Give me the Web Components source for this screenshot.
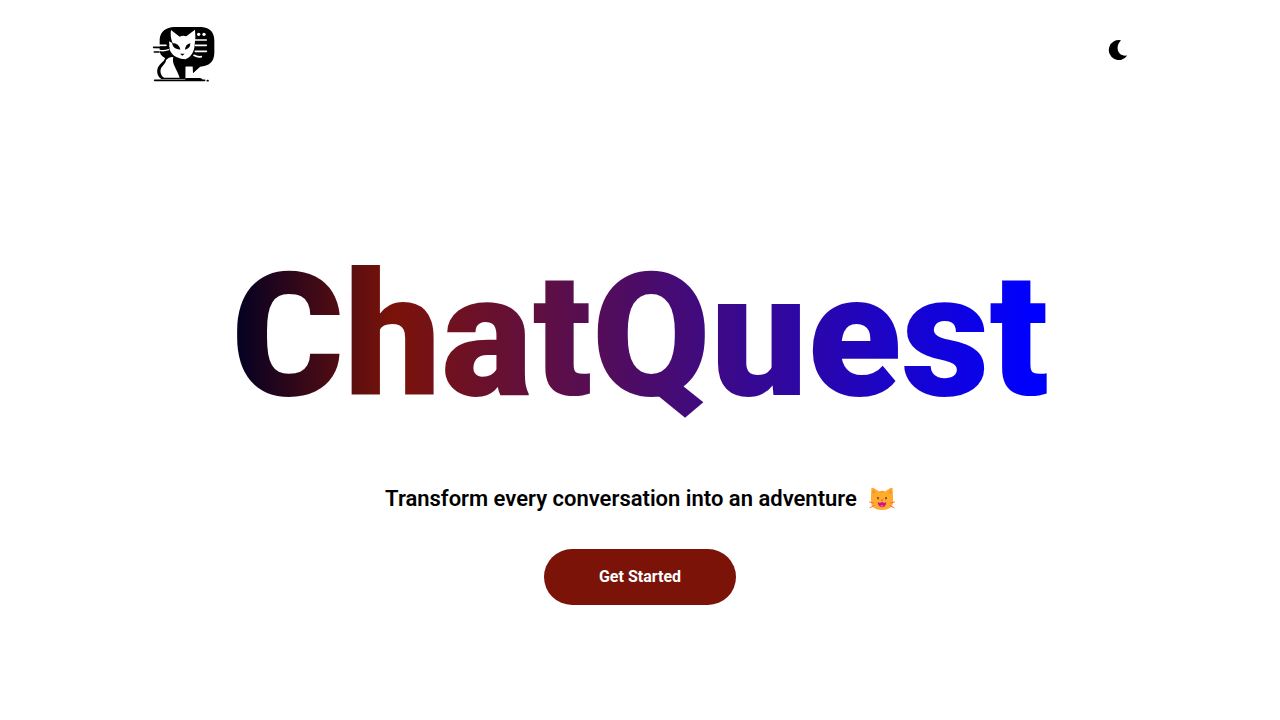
<!DOCTYPE html>
<html lang="en">
<head>
<meta charset="utf-8">
<meta name="viewport" content="width=device-width, initial-scale=1">
<title>ChatQuest</title>
<style>
body { margin: 0; background: #fff; color: #000; font-family: Roboto, sans-serif; }
</style>
</head>
<body>
<chat-page>
  <site-header slot="header"></site-header>
  <hero-title>ChatQuest</hero-title>
  <hero-tagline>Transform every conversation into an adventure</hero-tagline>
  <action-button>Get Started</action-button>
</chat-page>
<script>
const define = (name, html) => {
  const template = document.createElement('template');
  template.innerHTML = html;
  customElements.define(name, class extends HTMLElement {
    constructor() {
      super();
      this.attachShadow({ mode: 'open' }).append(template.content.cloneNode(true));
    }
  });
};

define('chat-page', `
<style>
  :host { display: flex; flex-direction: column; min-height: 100vh; }
  main { flex: 1; display: flex; flex-direction: column; align-items: center; padding: 128px 16px 64px; }
</style>
<slot name="header"></slot>
<main><slot></slot></main>`);

define('brand-logo', `
<style>
  :host { display: block; }
  a { display: block; color: inherit; }
  svg { display: block; width: 64px; height: 56px; }
</style>
<a href="#" aria-label="ChatQuest home">
<svg viewBox="24 24 192 168" aria-hidden="true">
  <path d="M91 27H172C199 29 211 44 211 68V106C210 132 195 145 168 146L147 165V146H125V183H52C38 173 36 155 45 143C53 132 61 130 63 120C50 112 48 106 47 98V64C49 40 66 28 91 27Z"/>
  <path fill="#fff" d="M81 36C90 43 99 50 107 56Q117 51 127 55L153 35Q156 57 152 80C151 100 143 116 124 124Q111 124 97 117C82 108 74 96 76 80L75 70L86 76C80 62 79 48 81 36Z"/>
  <path fill="#fff" d="M66 126Q77 115 88 118C84 132 91 142 96 154Q103 168 107 179H60C49 172 46 156 54 146C63 136 66 132 66 126Z"/>
  <path fill="#fff" d="M125 146H146V181H125Z"/>
  <path d="M84 75Q106 76 109 95Q87 94 84 75ZM123 95Q124 79 139 76Q139 92 123 95ZM108 107H122L115 113Z"/>
  <path d="M146 145H169L147 165Z"/>
  <g fill="none" stroke="#fff" stroke-width="5" stroke-linecap="round">
    <path d="M153 66H187M154 82H187M154 100H187M150 112Q160 118 172 116M46 82H66"/>
    <path stroke-width="4" d="M46 97Q60 100 74 95"/>
  </g>
  <g fill="#fff"><circle cx="164" cy="49" r="5"/><circle cx="180" cy="49" r="5"/></g>
  <g fill="none" stroke="#000" stroke-width="5" stroke-linecap="round">
    <path d="M29 88L74 89M31 102H45M32 187H182M190 188H192"/>
  </g>
  <path d="M125 180H168Q176 181 176 187H123Z"/>
</svg>
</a>`);

define('theme-toggle', `
<style>
  :host { display: block; }
  button { display: block; border: 0; padding: 0; background: none; color: inherit; cursor: pointer; }
  svg { display: block; width: 20px; height: 20px; }
</style>
<button type="button" aria-label="Switch to dark theme">
<svg viewBox="0 0 20 20" aria-hidden="true"><path fill="currentColor" d="M13 .3A10 10 0 1 0 19.200 15.500C10.500 17 6 7.500 13 .3Z"/></svg>
</button>`);

define('site-header', `
<style>
  :host { display: block; }
  header { display: flex; justify-content: space-between; align-items: flex-start; max-width: 976px; margin: 0 auto; padding: 26px 24px 0; }
  theme-toggle { padding-top: 14px; }
</style>
<header><brand-logo></brand-logo><theme-toggle></theme-toggle></header>`);

define('hero-title', `
<style>
  :host { display: block; }
  h1 { margin: 0; font-size: 172px; line-height: 252px; font-weight: 900; white-space: nowrap;
       color: transparent; background: linear-gradient(90deg, #000024, #7b1309 20%, #00f 98%);
       -webkit-background-clip: text; background-clip: text; }
</style>
<h1><slot></slot></h1>`);

define('cat-emoji', `
<style>
  :host { display: block; }
  svg { display: block; width: 26px; height: 24px; }
</style>
<svg viewBox="0 0 78 72" role="img" aria-label="Smiling cat">
  <path fill="#ffac2e" d="M7 5Q8 0 14 3L29 13Q39 9 49 13L64 3Q70 0 71 5L72 27V48Q70 68 39 69Q8 68 6 48V27Z"/>
  <path fill="#ff8b30" d="M11 8L20 14L11 22ZM67 8L58 14L67 22ZM37 12H41V18H37Z"/>
  <path fill="#563018" d="M25 30H29V37H25ZM49 30H53V37H49Z"/>
  <path fill="#e83b62" d="M35 38H43L39 43Z"/>
  <path fill="#c9168c" d="M26 46Q33 49 39 45Q45 49 52 46Q51 61 39 61Q27 60 26 46Z"/>
  <path fill="#ff5685" d="M33 57Q39 51 45 57Q40 62 33 57Z"/>
  <path fill="none" stroke="#ff6b35" stroke-width="3" stroke-linecap="round" d="M2 45L14 48M3 62L15 56M76 45L64 48M75 62L63 56"/>
</svg>`);

define('hero-tagline', `
<style>
  :host { display: block; margin-top: 20px; }
  p { display: flex; align-items: center; justify-content: center; gap: 12px; margin: 0; font: 600 22px/34px Roboto, sans-serif; }
</style>
<p><span><slot></slot></span><cat-emoji></cat-emoji></p>`);

define('action-button', `
<style>
  :host { display: block; margin-top: 33px; }
  button { display: block; min-width: 192px; height: 56px; padding: 0 32px; border: 0; border-radius: 28px;
           background: #7b1309; color: #fff; font: 700 16px/24px Roboto, sans-serif; cursor: pointer; }
</style>
<button type="button"><slot></slot></button>`);
</script>
</body>
</html>
